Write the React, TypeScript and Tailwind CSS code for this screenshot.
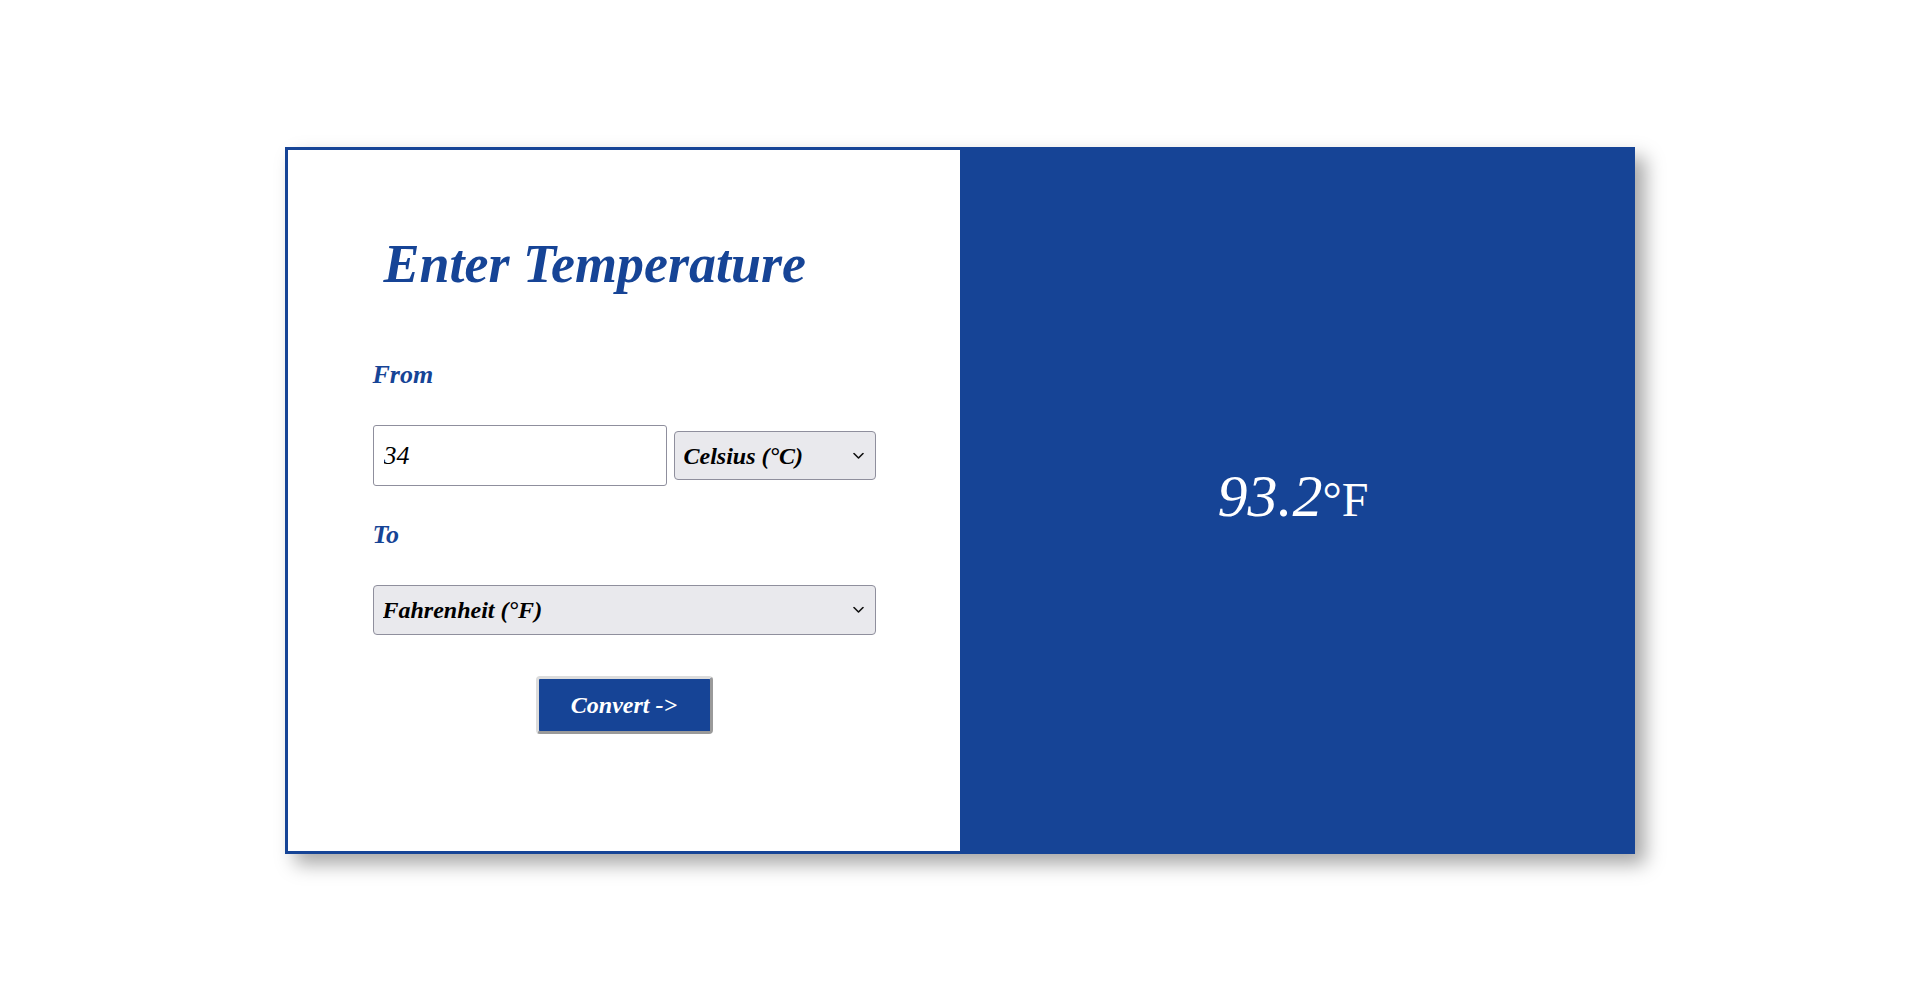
import React, { useState } from 'react';

const Chevron: React.FC = () => (
  <svg width="11" height="7" viewBox="0 0 11 7" className="pointer-events-none absolute right-[12px] top-1/2 -translate-y-1/2">
    <path d="M1 1l4.5 4.5L10 1" fill="none" stroke="#111" strokeWidth="1.6" strokeLinecap="round" strokeLinejoin="round" />
  </svg>
);

const Select: React.FC<{ value: string; options: string[]; className: string; onChange: (v: string) => void }> = ({ value, options, className, onChange }) => (
  <div className={`relative ${className}`}>
    <select
      value={value}
      onChange={(e) => onChange(e.target.value)}
      className="h-full w-full appearance-none rounded-[4px] border border-[#8f8f9d] bg-[#e9e9ed] pl-[9px] text-[24px] font-bold italic text-black outline-none"
    >
      {options.map((o) => (
        <option key={o}>{o}</option>
      ))}
    </select>
    <Chevron />
  </div>
);

export default function App() {
  const [temp, setTemp] = useState('34');
  const [from, setFrom] = useState('Celsius (°C)');
  const [to, setTo] = useState('Fahrenheit (°F)');
  const units = ['Celsius (°C)', 'Fahrenheit (°F)', 'Kelvin (K)'];

  return (
    <div className="flex min-h-screen w-full justify-center bg-white pt-[147px] font-['Liberation_Serif',serif]">
      <div className="flex h-[707px] w-[1350px] border-[3px] border-[#164496] shadow-[10px_10px_18px_rgba(0,0,0,0.35)]">
        {/* left: form */}
        <div className="flex w-[672px] flex-col items-center bg-white">
          <div className="w-[503px]">
            <h1 className="mt-[82px] pl-[11px] text-[54px] font-bold italic leading-[64px] text-[#164496]">Enter Temperature</h1>

            <p className="mt-[64px] text-[26px] font-bold italic leading-[30px] text-[#164496]">From</p>
            <div className="mt-[35px] flex items-center gap-[7px]">
              <input
                value={temp}
                onChange={(e) => setTemp(e.target.value)}
                className="h-[61px] w-[294px] rounded-[3px] border border-[#8f8f9d] px-[10px] text-[26px] italic text-black outline-none"
              />
              <Select value={from} options={units} onChange={setFrom} className="h-[49px] w-[202px]" />
            </div>

            <p className="mt-[34px] text-[26px] font-bold italic leading-[30px] text-[#164496]">To</p>
            <Select value={to} options={units} onChange={setTo} className="mt-[35px] h-[50px] w-[503px]" />

            <div className="mt-[41px] flex justify-center">
              <button className="h-[58px] w-[177px] rounded-[4px] border-[3px] border-solid border-t-[#dcdcdc] border-l-[#dcdcdc] border-r-[#9a9a9a] border-b-[#9a9a9a] bg-[#164496] text-[24px] font-bold italic text-white">
                Convert -&gt;
              </button>
            </div>
          </div>
        </div>

        {/* right: result */}
        <div className="flex flex-1 items-center justify-center bg-[#164496] text-white">
          <p className="pb-[10px] pr-[6px] text-[60px] leading-none">
            <span className="italic">93.2</span>
            <span className="text-[48px]">°F</span>
          </p>
        </div>
      </div>
    </div>
  );
}
